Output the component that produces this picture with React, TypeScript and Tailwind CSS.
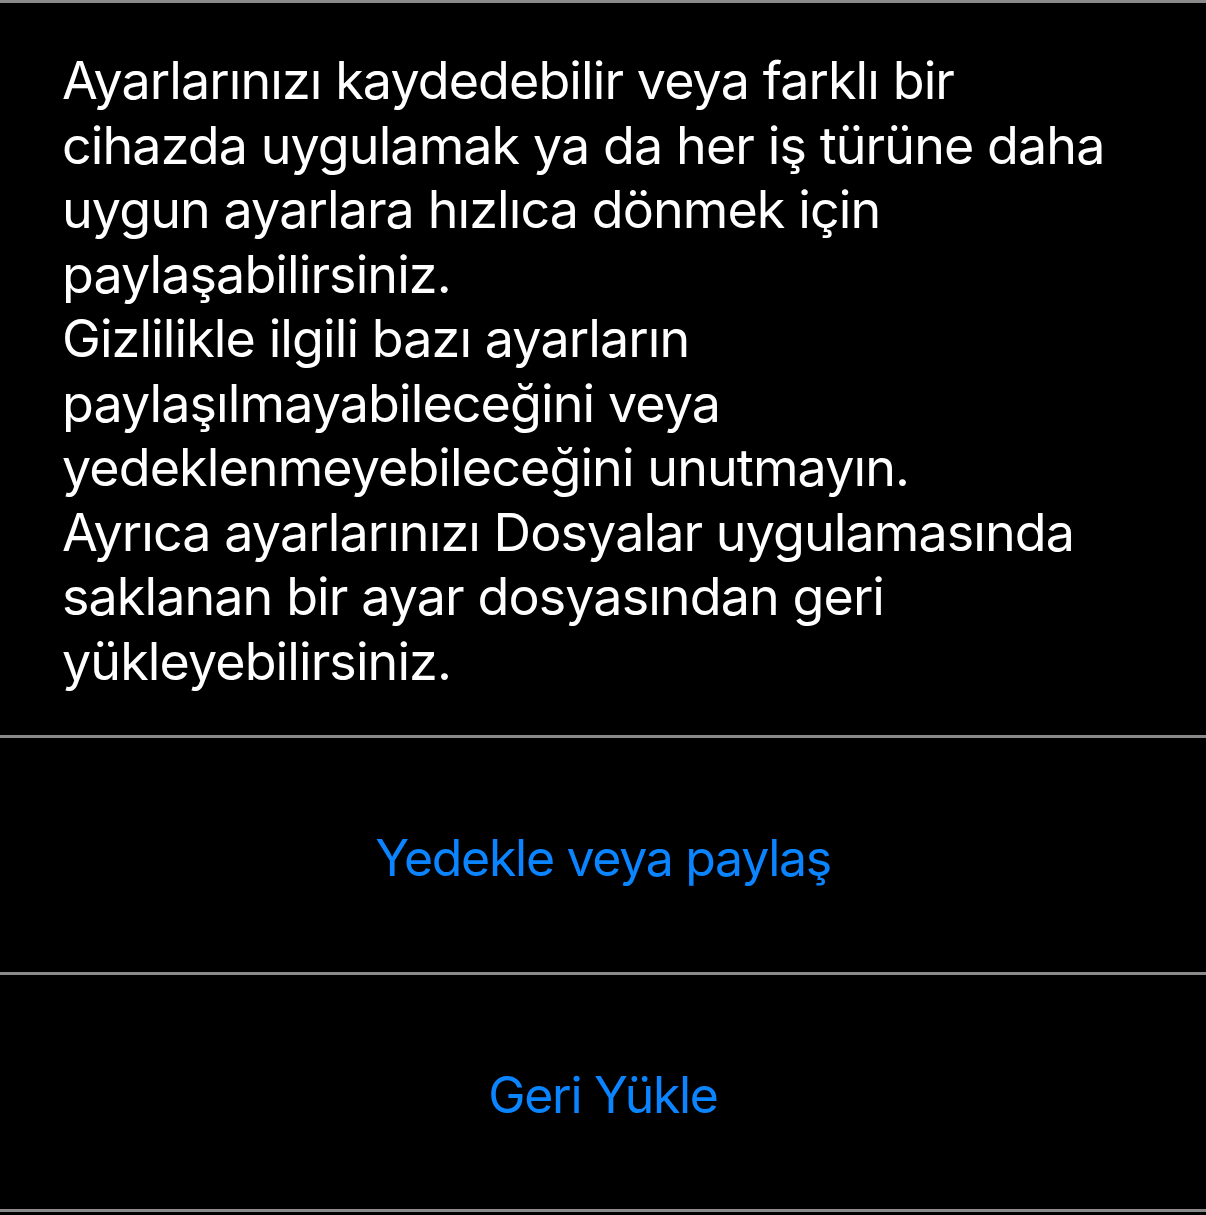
const paragraphs = [
  'Ayarlarınızı kaydedebilir veya farklı bir cihazda uygulamak ya da her iş türüne daha uygun ayarlara hızlıca dönmek için paylaşabilirsiniz.',
  'Gizlilikle ilgili bazı ayarların paylaşılmayabileceğini veya yedeklenmeyebileceğini unutmayın.',
  'Ayrıca ayarlarınızı Dosyalar uygulamasında saklanan bir ayar dosyasından geri yükleyebilirsiniz.',
];

const ActionRow = ({ label }: { label: string }) => (
  <button className="w-full h-[237px] flex items-center justify-center border-b-[3px] border-[#8a8a8a] text-[#0a84ff] text-[50px] leading-none tracking-[-1.3px] pt-[6px]">
    {label}
  </button>
);

export default function App() {
  return (
    <div
      className="w-[1206px] min-h-[1215px] bg-black text-white"
      style={{ fontFamily: 'Inter, "Noto Sans", sans-serif' }}
    >
      <div className="border-t-[3px] border-b-[3px] border-[#8a8a8a] pl-[62px] pr-[60px] pt-[46px] pb-[41px]">
        {paragraphs.map((p) => (
          <p key={p} className="text-[52px] leading-[64.5px] tracking-[-0.9px]">
            {p}
          </p>
        ))}
      </div>
      <ActionRow label="Yedekle veya paylaş" />
      <ActionRow label="Geri Yükle" />
    </div>
  );
}
